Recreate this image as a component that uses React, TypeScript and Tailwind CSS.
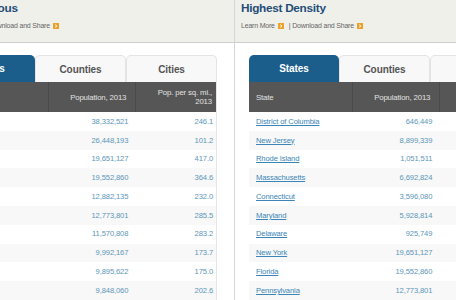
import React from "react";

type Row = { name: string; pop: string; density: string };

const populous: Row[] = [
  { name: "California", pop: "38,332,521", density: "246.1" },
  { name: "Texas", pop: "26,448,193", density: "101.2" },
  { name: "New York", pop: "19,651,127", density: "417.0" },
  { name: "Florida", pop: "19,552,860", density: "364.6" },
  { name: "Illinois", pop: "12,882,135", density: "232.0" },
  { name: "Pennsylvania", pop: "12,773,801", density: "285.5" },
  { name: "Ohio", pop: "11,570,808", density: "283.2" },
  { name: "Georgia", pop: "9,992,167", density: "173.7" },
  { name: "Michigan", pop: "9,895,622", density: "175.0" },
  { name: "North Carolina", pop: "9,848,060", density: "202.6" },
];

const dense: Row[] = [
  { name: "District of Columbia", pop: "646,449", density: "10,588.8" },
  { name: "New Jersey", pop: "8,899,339", density: "1,210.1" },
  { name: "Rhode Island", pop: "1,051,511", density: "1,017.1" },
  { name: "Massachusetts", pop: "6,692,824", density: "857.8" },
  { name: "Connecticut", pop: "3,596,080", density: "742.6" },
  { name: "Maryland", pop: "5,928,814", density: "609.8" },
  { name: "Delaware", pop: "925,749", density: "475.1" },
  { name: "New York", pop: "19,651,127", density: "417.0" },
  { name: "Florida", pop: "19,552,860", density: "364.6" },
  { name: "Pennsylvania", pop: "12,773,801", density: "285.5" },
];

const font = { fontFamily: '"Liberation Sans", Arial, sans-serif' };

function Arrow() {
  return (
    <span className="inline-flex h-[6px] w-[6px] items-center justify-center bg-[#f0a12c]">
      <svg width="4" height="4" viewBox="0 0 4 4">
        <path d="M1 0.5 L3 2 L1 3.5" stroke="#fff" strokeWidth="0.9" fill="none" />
      </svg>
    </span>
  );
}

function Panel({ title, rows }: { title: string; rows: Row[] }) {
  return (
    <div className="w-[304px] shrink-0 border-r border-[#d6d6d6] bg-white">
      <div className="h-[43px] border-b border-[#cdcdcd] bg-[#f0f0eb] pl-[6px]">
        <h2 className="text-[11.8px] font-bold leading-[16px] tracking-[-0.3px] text-[#1f4d78]">{title}</h2>
        <div className="mt-[5px] flex items-center gap-[3px] text-[7px] leading-[10px] tracking-[-0.2px] text-[#666]">
          <span>Learn More</span>
          <Arrow />
          <span className="ml-[2px]">| Download and Share</span>
          <Arrow />
        </div>
      </div>
      <div className="pl-[14px] pt-[12px]">
        <div className="flex w-[272px] text-[10px] font-bold tracking-[-0.1px]">
          <div className="flex h-[27px] w-[90px] items-center justify-center rounded-t-[5px] bg-[#1b5e8c] text-white">
            States
          </div>
          <div className="flex h-[27px] w-[91px] items-center justify-center rounded-t-[5px] border border-b-0 border-[#e4e4e4] bg-[#f8f8f8] text-[#555]">
            Counties
          </div>
          <div className="flex h-[27px] w-[91px] items-center justify-center rounded-t-[5px] border border-b-0 border-[#e4e4e4] bg-[#f8f8f8] text-[#555]">
            Cities
          </div>
        </div>
        <div className="w-[272px] border-r border-[#e6e6e6]">
          <div className="flex h-[30px] bg-[#565656] text-[7.8px] leading-[9px] tracking-[-0.15px] text-[#e2e2e2]">
            <div className="flex w-[104px] items-center border-r border-[#4a4a4a] pl-[7px]">State</div>
            <div className="flex w-[88px] items-center justify-end border-r border-[#4a4a4a] pr-[9px]">Population, 2013</div>
            <div className="flex w-[80px] items-center justify-end pr-[4px] text-right">
              Pop. per sq. mi.,
              <br />
              2013
            </div>
          </div>
          {rows.map((r, i) => (
            <div
              key={r.name}
              className={`flex h-[18.8px] items-center text-[7.6px] tracking-[-0.12px] ${i % 2 ? "bg-[#f8f8f8]" : "bg-white"}`}
            >
              <div className="w-[104px] pl-[7px] text-[#3b86b6] underline">{r.name}</div>
              <div className="w-[88px] pr-[8px] text-right text-[#5b96b8]">{r.pop}</div>
              <div className="w-[80px] pr-[3px] text-right text-[#5b96b8]">{r.density}</div>
            </div>
          ))}
        </div>
      </div>
    </div>
  );
}

export default function App() {
  return (
    <div className="h-[300px] w-[456px] overflow-hidden bg-white" style={font}>
      <div className="ml-[-69px] flex h-[300px]">
        <Panel title="Most Populous" rows={populous} />
        <Panel title="Highest Density" rows={dense} />
      </div>
    </div>
  );
}
